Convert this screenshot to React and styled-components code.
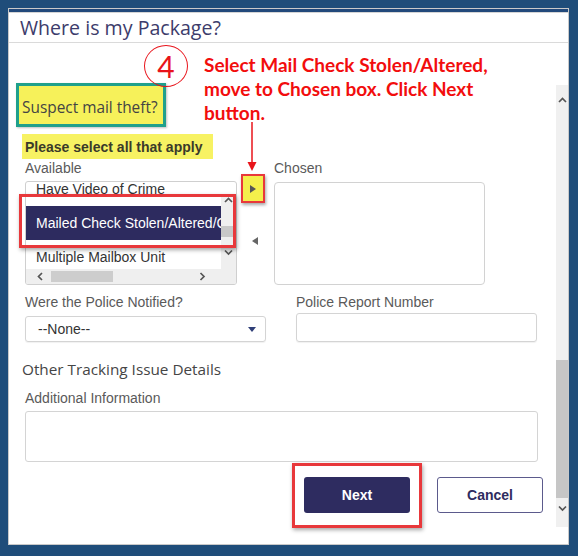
import React from 'react';
import styled, { createGlobalStyle } from 'styled-components';

const GlobalStyle = createGlobalStyle`
  html, body {
    margin: 0;
    padding: 0;
    background: #1f4d7a;
  }
  body {
    font-family: "Liberation Sans", Arial, sans-serif;
  }
  * {
    box-sizing: border-box;
  }
`;

const Frame = styled.div`
  width: 578px;
  height: 556px;
  padding: 8px 9px 11px 8px;
  background: #1f4d7a;
`;

const Panel = styled.div`
  width: 561px;
  height: 537px;
  background: #fff;
  border: 1px solid #c9c9c9;
  display: flex;
  flex-direction: column;
`;

const Header = styled.div`
  height: 34px;
  border-top: 3px solid #22497b;
  border-bottom: 1px solid #dadada;
  box-shadow: inset 0 1px 0 #d5d5d5;
  display: flex;
  align-items: center;
  padding-left: 11px;
  font-family: "Open Sans", sans-serif;
  font-size: 19.6px;
  color: #3d3c6b;
`;

const Body = styled.div`
  flex: 1;
  display: flex;
`;

const Content = styled.div`
  flex: 1;
  position: relative;
  display: flex;
  flex-direction: column;
  padding: 0 13px 0 16px;
`;

/* red callout drawn over the form */
const Annotation = styled.div`
  position: absolute;
  top: 2px;
  left: 135px;
  display: flex;
  align-items: flex-start;
`;

const StepCircle = styled.div`
  width: 44px;
  height: 42px;
  border: 1.5px solid #e8141b;
  border-radius: 50%;
  display: flex;
  align-items: center;
  justify-content: center;
  font-family: Lato, sans-serif;
  font-weight: 400;
  font-size: 30px;
  color: #e8141b;
`;

const CalloutText = styled.div`
  margin: 8px 0 0 16px;
  font-family: Lato, sans-serif;
  font-weight: 700;
  font-size: 19px;
  line-height: 24px;
  color: #f20d0d;
  white-space: nowrap;
`;

const CalloutArrow = styled.svg`
  position: absolute;
  top: 79px;
  left: 238px;
`;

const SuspectBox = styled.div`
  margin: 40px 0 0 -9px;
  width: 150px;
  height: 44px;
  border: 3px solid #1fa08c;
  background: #f6f15a;
  box-shadow: 1px 1px 2px rgba(0, 0, 0, 0.25);
  display: flex;
  align-items: flex-end;
  padding: 0 0 6px 3px;
  font-family: "Open Sans", sans-serif;
  font-size: 15.4px;
  color: #444;
`;

const PleaseBadge = styled.div`
  align-self: flex-start;
  margin: 7px 0 0 -3px;
  width: 191px;
  height: 25px;
  background: #f7f263;
  padding-left: 3px;
  display: flex;
  align-items: center;
  font-weight: 700;
  font-size: 14px;
  color: #3a3a2a;
`;

const DualRow = styled.div`
  margin-top: 1px;
  display: grid;
  grid-template-columns: 212px 37px 211px;
`;

const FieldLabel = styled.div`
  font-size: 14px;
  line-height: ${p => p.$lh || 16}px;
  margin-top: ${p => p.$mt || 0}px;
  margin-bottom: ${p => p.$mb || 0}px;
  color: #5a5a5a;
  white-space: nowrap;
`;

const Column = styled.div`
  display: flex;
  flex-direction: column;
`;

const ListWrap = styled.div`
  position: relative;
`;

const ListBox = styled.div`
  height: 104px;
  border: 1px solid #cfcfcf;
  border-radius: 3px;
  overflow: hidden;
  display: grid;
  grid-template-columns: 1fr 15px;
  grid-template-rows: 1fr 15px;
`;

const ListViewport = styled.div`
  overflow: hidden;
`;

const ListItems = styled.div`
  margin-top: -10px;
`;

const ListItem = styled.div`
  height: 34px;
  padding-left: 10px;
  display: flex;
  align-items: center;
  font-size: 14px;
  white-space: nowrap;
  overflow: hidden;
  color: ${p => (p.$selected ? '#fff' : '#333')};
  background: ${p => (p.$selected ? '#2d2b5f' : 'transparent')};
`;

const VScroll = styled.div`
  display: flex;
  flex-direction: column;
  padding-top: 12px;
`;

const VTrack = styled.div`
  flex: 1;
  background: #efefef;
  display: flex;
  flex-direction: column;
  align-items: center;
`;

const ArrowCap = styled.div`
  height: ${p => p.$h}px;
  margin-top: ${p => p.$mt || 0}px;
  display: flex;
  justify-content: center;
  align-items: ${p => p.$align || 'center'};
  padding-top: ${p => p.$pt || 0}px;
  flex-shrink: 0;
`;

const SmallThumb = styled.div`
  align-self: stretch;
  height: 11px;
  margin-top: ${p => p.$mt}px;
  background: #c8c8c8;
`;

const HScroll = styled.div`
  grid-column: 1 / span 2;
  background: #efefef;
  display: flex;
  align-items: center;
  padding-left: 11px;
`;

const HThumb = styled.div`
  width: 62px;
  height: 11px;
  margin: 0 auto 0 7px;
  background: #cdcdcd;
`;

const HEnd = styled.div`
  width: 12px;
  margin-right: 28px;
  display: flex;
  justify-content: center;
`;

const RedFrame = styled.div`
  position: absolute;
  top: ${p => p.$top}px;
  left: ${p => p.$left}px;
  right: ${p => p.$right}px;
  bottom: ${p => p.$bottom}px;
  border: 3px solid #e8383b;
  box-shadow: 1px 2px 4px rgba(0, 0, 0, 0.35);
  pointer-events: none;
`;

const MoveColumn = styled.div`
  display: flex;
  flex-direction: column;
  align-items: flex-start;
  padding-top: 14px;
`;

const MoveRight = styled.div`
  margin-left: 4px;
  width: 24px;
  height: 29px;
  background: #f4ef4c;
  border: 2px solid #e8383b;
  box-shadow: 1px 2px 3px rgba(0, 0, 0, 0.35);
  display: flex;
  align-items: center;
  justify-content: center;
`;

const Triangle = styled.div`
  width: 0;
  height: 0;
  border-top: 4px solid transparent;
  border-bottom: 4px solid transparent;
  ${p => (p.$dir === 'left'
    ? 'border-right: 6px solid #666;'
    : 'border-left: 6px solid #555;')}
`;

const MoveLeft = styled.div`
  margin: 34px 0 0 15px;
`;

const ChosenBox = styled.div`
  height: 103px;
  margin-top: 1px;
  border: 1px solid #d2d2d2;
  border-radius: 4px;
`;

const PoliceRow = styled.div`
  display: grid;
  grid-template-columns: 241px 241px;
  column-gap: 30px;
`;

const SelectBox = styled.div`
  margin-top: ${p => p.$mt}px;
  height: ${p => p.$h}px;
  border: 1px solid #d4d4d4;
  border-radius: 3px;
  box-shadow: 0 1px 1px rgba(0, 0, 0, 0.06);
  display: flex;
  align-items: center;
  justify-content: space-between;
  padding: 0 9px 0 12px;
  font-size: 14px;
  color: #333;
`;

const Caret = styled.div`
  width: 0;
  height: 0;
  border-left: 4px solid transparent;
  border-right: 4px solid transparent;
  border-top: 5px solid #2f3f78;
`;

const SectionTitle = styled.div`
  margin: 17px 0 0 -3px;
  font-family: "Open Sans", sans-serif;
  font-size: 15.3px;
  line-height: 20px;
  color: #454545;
`;

const TextArea = styled.textarea`
  margin-top: 4px;
  width: 513px;
  height: 51px;
  border: 1px solid #d4d4d4;
  border-radius: 3px;
  resize: none;
  outline: none;
`;

const ButtonRow = styled.div`
  margin-top: 15px;
  display: flex;
  justify-content: flex-end;
  gap: 27px;
`;

const ButtonWrap = styled.div`
  position: relative;
`;

const Button = styled.button`
  width: 106px;
  height: 36px;
  border-radius: 3px;
  font-family: "Liberation Sans", Arial, sans-serif;
  font-weight: 700;
  font-size: 14px;
  background: ${p => (p.$primary ? '#2e2c60' : '#fff')};
  color: ${p => (p.$primary ? '#fff' : '#2e2c60')};
  border: ${p => (p.$primary ? 'none' : '1px solid #5b5a8c')};
`;

const ScrollBar = styled.div`
  width: 12px;
  margin: 42px 0 17px;
  background: #f0f0f0;
  display: flex;
  flex-direction: column;
`;

const Spacer = styled.div`
  flex: 1;
`;

const BigThumb = styled.div`
  height: 138px;
  background: #c6c6c6;
`;

const chevronPoints = {
  up: '1,5 4.5,1.5 8,5',
  down: '1,1.5 4.5,5 8,1.5',
  left: '5,1 1.5,4.5 5,8',
  right: '1.5,1 5,4.5 1.5,8',
};

const Chevron = ({ dir }) => {
  const wide = dir === 'up' || dir === 'down';
  return (
    <svg width={wide ? 9 : 7} height={wide ? 7 : 9} viewBox={wide ? '0 0 9 7' : '0 0 7 9'}>
      <polyline points={chevronPoints[dir]} fill="none" stroke="#555" strokeWidth="1.7" />
    </svg>
  );
};

const App = () => {
  return (
    <Frame>
      <GlobalStyle />
      <Panel>
        <Header>Where is my Package?</Header>
        <Body>
          <Content>
            <SuspectBox>Suspect mail theft?</SuspectBox>
            <PleaseBadge>Please select all that apply</PleaseBadge>

            <DualRow>
              <Column>
                <FieldLabel $mb={5}>Available</FieldLabel>
                <ListWrap>
                  <ListBox>
                    <ListViewport>
                      <ListItems>
                        <ListItem>Have Video of Crime</ListItem>
                        <ListItem $selected>Mailed Check Stolen/Altered/Cashed</ListItem>
                        <ListItem>Multiple Mailbox Unit</ListItem>
                      </ListItems>
                    </ListViewport>
                    <VScroll>
                      <VTrack>
                        <ArrowCap $h={12}><Chevron dir="up" /></ArrowCap>
                        <SmallThumb $mt={20} />
                        <ArrowCap $h={12} $mt={9}><Chevron dir="down" /></ArrowCap>
                      </VTrack>
                    </VScroll>
                    <HScroll>
                      <Chevron dir="left" />
                      <HThumb />
                      <HEnd><Chevron dir="right" /></HEnd>
                    </HScroll>
                  </ListBox>
                  <RedFrame $top={13} $left={-6} $right={1} $bottom={37} />
                </ListWrap>
              </Column>

              <MoveColumn>
                <MoveRight><Triangle $dir="right" /></MoveRight>
                <MoveLeft><Triangle $dir="left" /></MoveLeft>
              </MoveColumn>

              <Column>
                <FieldLabel $mb={5}>Chosen</FieldLabel>
                <ChosenBox />
              </Column>
            </DualRow>

            <PoliceRow>
              <Column>
                <FieldLabel $lh={17} $mt={9}>Were the Police Notified?</FieldLabel>
                <SelectBox $mt={5} $h={26}>
                  --None--
                  <Caret />
                </SelectBox>
              </Column>
              <Column>
                <FieldLabel $lh={17} $mt={9}>Police Report Number</FieldLabel>
                <SelectBox $mt={2} $h={29} />
              </Column>
            </PoliceRow>

            <SectionTitle>Other Tracking Issue Details</SectionTitle>
            <FieldLabel $lh={17} $mt={11}>Additional Information</FieldLabel>
            <TextArea />

            <ButtonRow>
              <ButtonWrap>
                <Button $primary>Next</Button>
                <RedFrame $top={-14} $left={-12} $right={-12} $bottom={-15} />
              </ButtonWrap>
              <Button>Cancel</Button>
            </ButtonRow>

            <Annotation>
              <StepCircle>4</StepCircle>
              <CalloutText>
                Select Mail Check Stolen/Altered,<br />
                move to Chosen box. Click Next<br />
                button.
              </CalloutText>
            </Annotation>
            <CalloutArrow width="10" height="49" viewBox="0 0 10 49">
              <line x1="5" y1="0" x2="5" y2="42" stroke="#e8141b" strokeWidth="1.5" />
              <polygon points="0.5,40 9.5,40 5,49" fill="#e8141b" />
            </CalloutArrow>
          </Content>
          <ScrollBar>
            <ArrowCap $h={30}><Chevron dir="up" /></ArrowCap>
            <Spacer />
            <BigThumb />
            <ArrowCap $h={29} $align="flex-start" $pt={7}><Chevron dir="down" /></ArrowCap>
          </ScrollBar>
        </Body>
      </Panel>
    </Frame>
  );
};

export default App;
